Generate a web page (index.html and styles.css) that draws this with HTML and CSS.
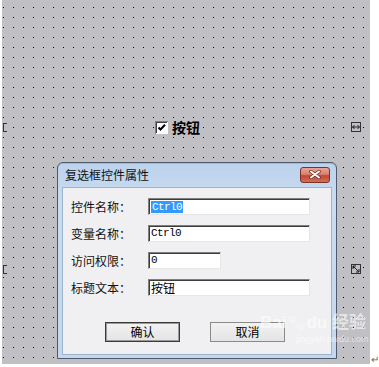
FILE: index.html
```html
<!DOCTYPE html>
<html>
<head>
  <title>复选框控件属性</title>
  <meta charset="utf-8">
  <link rel="stylesheet" href="styles.css">
</head>
<body>
<div class="page">
  <div class="canvas">
    <!-- 画布边缘的尺寸手柄 -->
    <span class="grip-left grip-a"></span>
    <span class="grip-left grip-b"></span>
    <span class="grip grip-a">
      <svg width="8" height="8" viewBox="0 0 8 8"><path d="M0.5 4H7.5M0.5 4L2.5 2M0.5 4L2.5 6M7.5 4L5.5 2M7.5 4L5.5 6" stroke="#222" stroke-width="1" fill="none"/></svg>
    </span>
    <span class="grip grip-b">
      <svg width="8" height="8" viewBox="0 0 8 8"><path d="M1 1L7 7M1 1H4M1 1V4M7 7H4M7 7V4" stroke="#222" stroke-width="1" fill="none"/></svg>
    </span>

    <div class="chk">
      <svg class="chk-box" width="13" height="13" viewBox="0 0 13 13">
        <rect x="0" y="0" width="13" height="13" fill="#808080"/>
        <rect x="1" y="1" width="12" height="12" fill="#fff"/>
        <rect x="1" y="1" width="11" height="11" fill="#404040"/>
        <rect x="2" y="2" width="10" height="10" fill="#fff"/>
        <path d="M3.5 6.5L5.5 8.5L10 3.8" stroke="#000" stroke-width="2" fill="none"/>
      </svg>
      <span>按钮</span>
    </div>

    <div class="dialog">
      <div class="titlebar">
        <span class="title">复选框控件属性</span>
        <span class="close">
          <svg width="12" height="9" viewBox="0 0 12 9"><path d="M2 1.5L10 7.5M10 1.5L2 7.5" stroke="#6b2a20" stroke-width="3.4" stroke-linecap="round"/><path d="M2 1.5L10 7.5M10 1.5L2 7.5" stroke="#fff" stroke-width="2" stroke-linecap="round"/></svg>
        </span>
      </div>
      <div class="client">
        <div class="row">
          <span class="lbl">控件名称：</span>
          <span class="field wide mono"><span class="sel">Ctrl0</span></span>
        </div>
        <div class="row">
          <span class="lbl">变量名称：</span>
          <span class="field wide mono">Ctrl0</span>
        </div>
        <div class="row">
          <span class="lbl">访问权限：</span>
          <span class="field short mono">0</span>
        </div>
        <div class="row">
          <span class="lbl">标题文本：</span>
          <span class="field wide">按钮</span>
        </div>
        <div class="buttons">
          <span class="btn default">确认</span>
          <span class="btn">取消</span>
        </div>
      </div>
    </div>

    <div class="watermark">
      <div class="wm-main">Bai<span class="paw">&#x1F43E;</span>du 经验</div>
      <div class="wm-url">jingyan.baidu.com</div>
    </div>
  </div>
  <span class="para">&#x21B5;</span>
</div>
</body>
</html>
```

FILE: styles.css
```css
body {
  margin: 0;
  background: #fff;
  font-family: 'Noto Sans CJK SC', 'Liberation Sans', sans-serif;
  overflow: hidden;
}
.page {
  display: flex;
  height: 367px;
}
/* 点阵画布：每 10px 一个点 */
.canvas {
  position: relative;
  margin-left: 2px;
  width: 368px;
  height: 364px;
  background-color: #c0bfc4;
  background-image: url("data:image/svg+xml,%3Csvg xmlns='http://www.w3.org/2000/svg' width='10' height='10'%3E%3Crect x='0' y='0' width='1' height='1' fill='%23000'/%3E%3C/svg%3E");
  background-size: 10px 10px;
  background-position: 1px 7px;
}
.para {
  align-self: flex-end;
  margin: 0 0 3px 1px;
  font-size: 10px;
  line-height: 10px;
  color: #666;
}

/* 手柄 */
.grip-left {
  position: absolute;
  left: 1px;
  width: 3px;
  height: 7px;
  border: 1px solid #333;
  border-right: none;
}
.grip-left.grip-a { top: 123px; }
.grip-left.grip-b { top: 265px; }
.grip {
  position: absolute;
  left: 349px;
  width: 8px;
  height: 8px;
  border: 1px solid #333;
  display: flex;
}
.grip.grip-a { top: 122px; }
.grip.grip-b { top: 264px; }

/* 复选框控件 */
.chk {
  position: absolute;
  left: 153px;
  top: 119px;
  display: flex;
  align-items: center;
  gap: 4px;
  font-size: 14px;
  font-weight: bold;
  line-height: 16px;
  color: #000;
}
.chk-box { display: block; }

/* 对话框 */
.dialog {
  position: absolute;
  left: 55px;
  top: 162px;
  width: 270px;
  height: 192px;
  border: 1px solid #4d5a6c;
  border-radius: 6px 6px 0 0;
  background: linear-gradient(#bcd2ec, #cadcf1 20%, #c3d7ee);
  box-shadow: 0 1px 0 #8fc4dc inset;
  display: flex;
  flex-direction: column;
  padding: 0 4px 3px 4px;
  box-sizing: content-box;
}
.titlebar {
  height: 24px;
  display: flex;
  align-items: center;
  justify-content: space-between;
  padding: 0 2px 0 3px;
}
.title {
  font-size: 12px;
  color: #111;
  line-height: 14px;
}
.close {
  width: 28px;
  height: 14px;
  border: 1px solid #7a3228;
  border-radius: 3px;
  background: linear-gradient(#e8a497, #d98170 45%, #c44630 55%, #d0705a);
  display: flex;
  align-items: center;
  justify-content: center;
  margin-top: -1px;
}
.close svg { display: block; }
.client {
  flex: 1;
  background: #f0f0f2;
  border: 1px solid #9fb3cb;
  padding: 10px 0 0 8px;
  display: flex;
  flex-direction: column;
  gap: 10px;
}
.row {
  display: flex;
  align-items: center;
  height: 17px;
}
.lbl {
  width: 77px;
  font-size: 12px;
  color: #111;
  line-height: 14px;
}
.field {
  height: 17px;
  box-sizing: border-box;
  background: #fff;
  border: 1px solid;
  border-color: #7f7f7f #e6e6e6 #e6e6e6 #7f7f7f;
  box-shadow: 1px 1px 0 #3c3c3c inset;
  padding: 0 0 0 2px;
  font-size: 12px;
  line-height: 15px;
  color: #000;
  display: flex;
  align-items: center;
}
.field.wide { width: 162px; }
.field.short { width: 73px; }
.mono {
  font-family: 'Liberation Mono', monospace;
  font-size: 11px;
  letter-spacing: -0.6px;
}
.sel {
  background: #3399ff;
  color: #fff;
  padding: 0 1px;
  line-height: 12px;
}
.buttons {
  display: flex;
  gap: 30px;
  padding-left: 34px;
  margin-top: 16px;
}
.btn {
  width: 73px;
  height: 18px;
  border: 1px solid #8a8a8a;
  background: linear-gradient(#f2f2f2, #e4e4e4);
  font-size: 12px;
  line-height: 18px;
  text-align: center;
  color: #000;
}
.btn.default {
  border-color: #3a3a3a;
  box-shadow: 0 0 0 1px #9a9a9a inset;
}

/* 水印 */
.watermark {
  position: absolute;
  left: 258px;
  top: 312px;
  color: rgba(255, 255, 255, 0.6);
  font-family: 'Liberation Sans', 'Noto Sans CJK SC', sans-serif;
}
.wm-main {
  font-size: 17px;
  font-weight: bold;
  line-height: 22px;
  display: flex;
  align-items: center;
}
.paw {
  font-size: 16px;
  opacity: 0.5;
  filter: grayscale(1) brightness(3);
}
.wm-url {
  font-size: 9px;
  line-height: 10px;
  padding-left: 36px;
}
```
